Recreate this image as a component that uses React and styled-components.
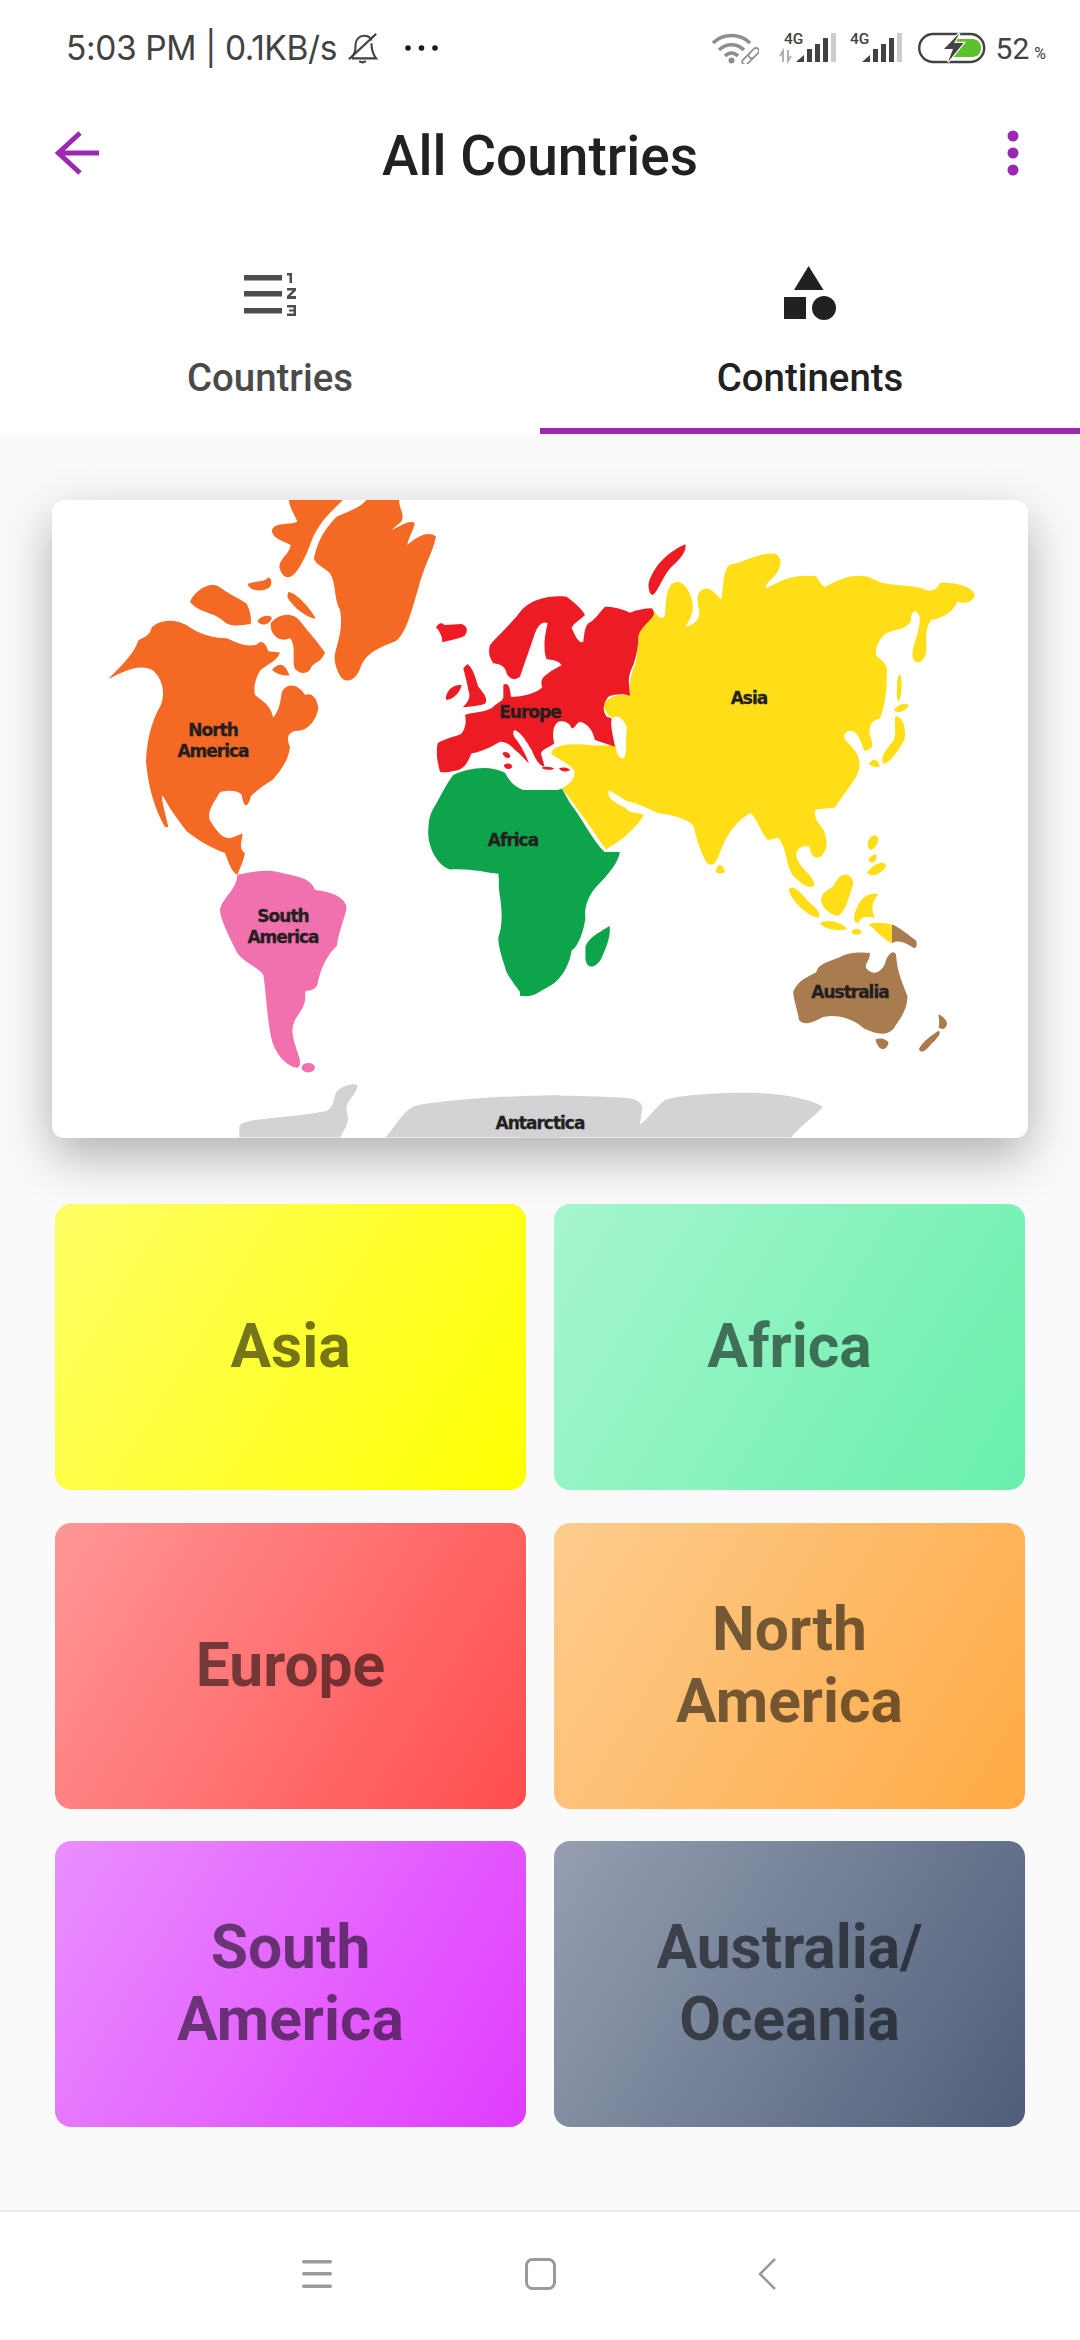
import React from "react";
import styled, { createGlobalStyle } from "styled-components";

const GlobalStyle = createGlobalStyle`
  html, body { margin: 0; padding: 0; background: #fafafa; }
  * { box-sizing: border-box; }
  body { font-family: Roboto, sans-serif; }
`;

const Page = styled.div`
  width: 1080px;
  height: 2340px;
  display: flex;
  flex-direction: column;
  overflow: hidden;
  background: #fafafa;
`;

const StatusBar = styled.div`
  height: 96px;
  background: #fff;
  padding: 0 34px 0 66px;
  display: flex;
  align-items: center;
  justify-content: space-between;
  color: #424242;
`;

const StatusGroup = styled.div`
  display: flex;
  align-items: center;
`;

const StatusText = styled.span`
  font-family: Inter, sans-serif;
  font-size: 33.5px;
  letter-spacing: -0.4px;
  white-space: nowrap;
`;

const Percent = styled.span`
  font-family: Roboto, sans-serif;
  font-size: 30px;
  margin-left: 10px;
  small { font-size: 16px; margin-left: 5px; }
`;

const AppBar = styled.div`
  height: 118px;
  background: #fff;
  display: grid;
  grid-template-columns: 1fr auto 1fr;
  align-items: center;
  padding: 0 61px 4px 55px;
`;

const Title = styled.h1`
  margin: 0;
  padding: 6px 0 0 6px;
  font-size: 55px;
  font-weight: 500;
  color: #212121;
`;

const BarEnd = styled.div`
  display: flex;
  justify-content: ${(p) => (p.$right ? "flex-end" : "flex-start")};
`;

const Tabs = styled.div`
  display: grid;
  grid-template-columns: 540px 540px;
  background: #fff;
  height: 220px;
`;

const Tab = styled.div`
  display: flex;
  flex-direction: column;
  align-items: center;
  padding-top: 48px;
  color: ${(p) => (p.$active ? "#212121" : "#4a4a4a")};
  border-bottom: 6px solid ${(p) => (p.$active ? "#9c27b0" : "transparent")};
`;

const TabIcon = styled.div`
  height: 64px;
  display: flex;
  align-items: center;
  justify-content: center;
`;

const TabLabel = styled.span`
  margin-top: 29px;
  font-size: 38.4px;
  font-weight: 500;
`;

const Content = styled.div`
  flex: 1;
  padding: 66px 52px 0;
`;

const MapCard = styled.div`
  height: 638px;
  background: #fff;
  border-radius: 12px;
  overflow: hidden;
  box-shadow: 0 18px 50px rgba(0, 0, 0, 0.3);
`;

const Grid = styled.div`
  margin: 66px 3px 0;
  display: grid;
  grid-template-columns: repeat(2, 471px);
  grid-auto-rows: 286px;
  column-gap: 28px;
  row-gap: 32.5px;
`;

const Tile = styled.div`
  border-radius: 16px;
  display: flex;
  align-items: center;
  justify-content: center;
  text-align: center;
  padding: 0 40px;
  background: linear-gradient(121.3deg, ${(p) => p.$from}, ${(p) => p.$to});
  color: rgba(0, 0, 0, 0.54);
  font-size: 60.5px;
  font-weight: 700;
  line-height: 72px;
`;

const NavBar = styled.div`
  height: 130px;
  background: #fff;
  border-top: 2px solid #e8e8e8;
  display: flex;
  align-items: center;
  justify-content: center;
  gap: 193px;
  padding: 0 2px 4px 0;
`;

const NavBackSlot = styled.div`
  display: flex;
  margin-left: 9px;
`;

const MapLabel = styled.text`
  font-family: "DejaVu Sans", sans-serif;
  font-weight: 700;
  font-size: 17px;
  letter-spacing: -1px;
  fill: #231f20;
  stroke: #231f20;
  stroke-width: 0.3px;
  text-anchor: middle;
`;

const tiles = [
  { name: "Asia", from: "#ffff66", to: "#ffff00" },
  { name: "Africa", from: "#a7f5cf", to: "#68f0ab" },
  { name: "Europe", from: "#ff9696", to: "#ff4d4d" },
  { name: "North America", from: "#fdcc8e", to: "#ffaa44" },
  { name: "South America", from: "#e98fff", to: "#e03cff" },
  { name: "Australia/ Oceania", from: "#959fb0", to: "#4f5e7a" },
];

// paths are traced in the crop coordinates of the left half, right half and Europe
const WorldMap = () => (
  <svg width="976" height="638" viewBox="0 0 976 638" style={{ display: "block" }}>
    <g transform="translate(-12 -20) scale(0.3333 0.4337)">
      <g fill="#f46a25">
        <path d="M746 45 L910 45 C880 70 850 85 820 130 C800 170 790 190 765 215 C745 232 725 225 718 200 C720 180 750 170 752 150 C730 140 695 135 696 115 C705 95 760 105 772 95 C760 75 750 65 746 45Z" />
        <path d="M980 45 L1078 45 C1075 65 1095 75 1085 95 L1055 115 C1085 105 1110 90 1125 100 C1115 125 1105 135 1102 150 C1125 135 1160 115 1188 130 C1180 165 1150 200 1135 250 C1115 300 1100 350 1070 370 C1030 385 990 390 965 425 C955 450 940 465 915 462 C895 455 880 420 885 400 C895 370 910 340 900 300 C880 270 890 240 870 215 C850 200 825 195 822 180 C835 130 870 100 890 85 C930 70 960 65 980 45Z" />
        <path d="M450 280 C470 250 510 235 535 245 C560 260 590 270 620 285 C632 305 635 320 632 332 C600 335 570 340 550 325 C525 305 470 305 450 280Z" />
        <path d="M623 240 C640 232 670 238 685 225 C695 225 698 240 688 248 C670 258 630 258 623 240Z" />
        <path d="M745 258 C770 260 810 295 828 320 C800 318 760 295 742 270Z" />
        <path d="M652 325 C665 312 690 310 696 318 C690 332 665 340 652 325Z" />
        <path d="M692 330 C720 305 760 305 780 325 C800 345 830 370 855 398 C845 420 825 420 815 430 C805 450 780 448 765 435 C755 420 770 380 750 365 C720 375 690 360 692 330Z" />
        <path d="M696 438 C715 420 735 420 748 450 C730 452 710 448 696 438Z" />
        <path d="M204 460 C240 430 280 405 295 370 C310 362 330 360 335 340 C360 320 410 320 440 335 C475 355 520 365 560 365 C590 375 610 385 650 380 C665 365 680 380 685 395 L720 398 C710 420 680 425 660 440 C645 460 640 480 645 495 C665 510 690 515 700 548 C712 535 720 525 725 490 C740 465 775 470 795 495 C815 490 830 500 835 525 C830 555 800 580 770 578 C750 580 735 590 750 615 C745 650 720 670 700 690 C680 700 650 715 632 730 C625 755 612 760 605 725 C590 715 560 715 540 720 C520 745 500 765 510 785 C530 810 550 830 575 825 L608 815 C605 835 595 850 615 860 C610 880 600 895 592 910 C575 905 565 880 555 860 C520 850 480 835 440 810 C420 790 390 760 370 730 C360 725 370 750 385 800 L375 800 C345 760 325 710 318 650 C320 600 335 560 355 530 C380 500 370 460 340 440 C300 420 240 445 204 460Z" />
      </g>
      <path fill="#0ea44b" d="M1240 680 C1280 665 1350 655 1395 675 C1410 695 1420 705 1450 715 L1560 715 L1560 1130 C1530 1165 1490 1195 1450 1190 C1430 1170 1410 1150 1400 1135 C1390 1110 1375 1080 1375 1055 C1390 1020 1385 990 1380 960 C1375 940 1378 920 1375 908 C1340 905 1290 895 1230 898 C1200 890 1170 860 1165 820 C1165 780 1170 770 1190 745 C1210 715 1225 695 1240 680Z" />
      <path fill="#f171ae" d="M592 910 C630 905 680 895 720 905 C770 915 810 915 825 945 C860 950 910 955 920 985 C915 1010 900 1030 890 1075 C860 1095 840 1130 832 1165 C820 1180 805 1175 795 1180 C800 1210 785 1220 765 1245 C750 1270 760 1290 775 1325 C785 1345 780 1355 770 1355 C735 1350 705 1320 695 1290 C680 1240 680 1190 670 1140 C650 1120 600 1110 585 1080 C565 1050 540 1010 540 990 C550 960 590 945 592 910Z" />
      <ellipse fill="#f171ae" cx="805" cy="1355" rx="20" ry="11" />
      <g fill="#d1d3d4">
        <path d="M598 1516 L598 1490 C610 1470 720 1475 860 1455 C885 1445 880 1420 890 1410 C910 1395 940 1390 953 1395 C950 1420 915 1430 920 1455 C930 1480 920 1490 900 1516Z" />
        <path d="M1035 1516 C1070 1490 1090 1450 1130 1442 C1250 1425 1440 1420 1560 1418 L1560 1516Z" />
      </g>
    </g>
    <g transform="translate(468 -20) scale(0.3444 0.4337)">
      <g fill="#ffde17">
        <path d="M385 300 C400 310 405 325 420 315 C425 290 420 260 440 240 C465 225 490 245 500 280 C505 300 500 315 480 338 C505 335 525 320 520 300 C510 270 515 250 545 250 C565 255 575 270 585 275 C592 240 590 205 610 195 C650 190 700 165 740 170 C765 180 760 200 740 220 C720 235 710 245 715 250 C750 235 790 215 860 222 C875 240 880 250 890 245 C930 225 990 210 1030 230 C1060 245 1120 240 1170 250 C1190 260 1210 255 1220 237 C1260 235 1320 245 1320 268 C1310 285 1285 285 1270 280 C1260 305 1220 320 1195 322 C1175 340 1180 370 1180 395 C1175 420 1150 430 1140 410 C1135 380 1165 350 1160 315 C1150 295 1135 300 1135 325 C1125 345 1080 345 1060 355 C1040 370 1030 390 1035 405 C1055 420 1070 425 1065 450 C1065 500 1055 530 1045 550 C1020 555 1015 565 1015 585 C1025 610 1030 620 1000 625 C990 600 980 580 960 578 C945 578 935 590 945 600 C970 620 990 635 985 665 C975 695 945 715 915 755 L860 760 C850 770 860 785 880 805 C895 830 895 855 870 870 C850 875 845 860 840 845 C815 840 795 855 805 875 C820 900 855 915 855 935 C840 945 815 930 790 910 C770 880 775 850 750 825 L720 830 C700 815 695 790 670 768 C630 785 600 815 580 860 C570 885 555 895 540 880 C520 850 510 820 505 800 C495 785 460 775 400 768 C380 760 340 745 310 740 C290 730 270 720 258 716 C250 730 275 745 305 755 C315 770 340 765 360 772 C345 795 300 830 250 852 C220 820 180 770 145 735 L122 712 C140 700 160 695 158 670 C145 655 115 645 90 632 C95 610 140 605 215 612 L278 612 C280 630 285 640 300 642 C312 635 305 610 310 570 C300 550 285 540 270 548 C250 540 240 525 245 515 C260 500 290 490 320 498 C315 470 325 440 335 425 C345 390 340 360 350 345 C365 330 380 320 385 300Z" />
        <path d="M568 903 C572 885 585 880 596 903 C590 908 575 908 568 903Z" />
        <path d="M1010 835 C1020 815 1040 815 1040 830 C1035 850 1015 860 1010 845Z" />
        <path d="M1012 875 C1025 860 1040 860 1035 872 C1030 885 1015 885 1012 875Z" />
        <path d="M1008 905 C1025 885 1060 875 1063 890 C1055 905 1020 920 1008 905Z" />
        <path d="M780 945 C790 930 815 950 835 970 C855 985 875 995 868 1008 C845 1012 790 975 780 945Z" />
        <path d="M875 965 C880 945 905 945 915 930 C930 900 965 905 968 930 C955 960 950 990 925 1005 C905 1005 870 985 875 965Z" />
        <path d="M985 975 C1000 955 1030 950 1040 955 C1020 975 1020 990 1030 1010 C1010 1005 990 1005 985 1020 C965 1025 965 1005 985 975Z" />
        <path d="M870 1022 C890 1010 935 1020 950 1035 C920 1042 885 1035 870 1022Z" />
        <path d="M962 1040 C975 1030 990 1035 993 1043 C980 1052 965 1050 962 1040Z" />
        <path d="M1012 1025 C1030 1018 1060 1022 1080 1025 L1080 1068 C1055 1060 1030 1035 1012 1025Z" />
        <path d="M1095 465 C1100 440 1108 445 1108 470 C1108 490 1105 510 1098 510 C1092 500 1095 480 1095 465Z" />
        <path d="M1085 530 C1100 515 1120 512 1130 520 C1115 535 1095 540 1085 530Z" />
        <path d="M1090 545 C1110 540 1125 580 1115 600 C1095 630 1075 650 1055 655 C1045 640 1060 625 1085 600 C1095 580 1085 560 1090 545Z" />
        <path d="M1013 655 C1025 640 1035 640 1045 660 C1035 665 1020 660 1013 655Z" />
      </g>
      <path fill="#ed1c24" d="M373 240 C385 200 430 165 480 148 C485 160 470 180 440 200 C415 220 400 260 385 265 C378 265 373 255 373 240Z" />
      <g fill="#0ea44b">
        <path d="M-5 715 C40 720 90 720 122 712 L145 745 C180 780 210 830 245 858 L290 858 C285 885 250 915 225 935 C200 955 185 985 190 1010 C185 1040 170 1075 150 1085 C145 1110 130 1140 100 1160 C70 1175 40 1190 0 1190Z" />
        <path d="M190 1075 C205 1050 240 1040 260 1028 C265 1050 250 1080 235 1105 C220 1125 195 1130 190 1105Z" />
      </g>
      <g fill="#a97c50">
        <path d="M1080 1025 C1100 1030 1130 1050 1150 1062 C1155 1075 1150 1085 1135 1075 C1115 1065 1095 1060 1080 1068Z" />
        <path d="M793 1180 C810 1150 840 1145 860 1135 C865 1115 900 1110 930 1100 C960 1085 1000 1090 1015 1090 C1020 1105 1000 1115 1005 1125 C1025 1145 1050 1135 1060 1115 C1065 1095 1085 1080 1092 1095 C1095 1130 1105 1150 1125 1190 C1125 1225 1100 1245 1085 1265 C1060 1285 1030 1275 1000 1265 C970 1245 930 1230 880 1238 C850 1250 825 1260 810 1245 C805 1220 795 1200 793 1180Z" />
        <path d="M1032 1290 C1045 1285 1070 1290 1070 1300 C1060 1320 1040 1315 1032 1290Z" />
        <path d="M1158 1312 C1170 1295 1195 1280 1215 1270 C1225 1275 1215 1285 1195 1300 C1180 1315 1165 1325 1158 1312Z" />
        <path d="M1215 1232 C1225 1235 1240 1245 1240 1255 C1235 1268 1225 1268 1215 1262 C1220 1250 1215 1240 1215 1232Z" />
      </g>
      <path fill="#d1d3d4" d="M-10 1516 L-10 1428 C60 1415 200 1420 310 1425 C340 1428 355 1435 355 1450 L348 1486 C370 1475 395 1445 420 1430 C480 1415 640 1410 730 1415 C790 1420 850 1430 880 1445 C860 1465 810 1490 788 1516Z" />
    </g>
    <g transform="translate(373 90) scale(0.3333)" fill="#ed1c24">
      <path d="M33 112 C40 100 50 95 58 105 L110 102 C128 108 130 125 118 138 C95 148 70 152 52 157 C52 140 45 125 33 112Z" />
      <path d="M62 325 C65 300 85 282 110 285 C105 305 90 325 65 330Z" />
      <path d="M115 235 L127 222 C145 235 150 260 160 290 C175 310 188 320 182 340 C165 348 135 350 113 352 C125 340 140 325 130 300 C125 270 118 250 115 235Z" />
      <path d="M38 460 C60 445 90 440 108 432 C120 420 125 395 120 375 C140 365 190 370 210 345 C225 335 235 330 235 320 L235 285 C245 278 252 285 255 300 L258 320 C300 322 340 305 352 292 C345 275 350 262 370 250 C380 240 395 235 410 225 C400 212 385 210 365 208 C360 195 352 165 368 100 C355 92 340 100 328 135 C315 175 300 215 285 260 C270 272 255 270 245 250 C240 225 220 222 205 220 C195 205 188 190 195 165 C220 135 260 100 290 60 C320 28 370 15 425 20 C445 35 470 55 480 75 C465 90 445 100 440 115 C450 135 462 165 475 155 C478 130 480 110 490 100 C510 90 525 65 540 50 C560 50 590 55 615 68 C635 60 660 55 680 55 C690 65 688 75 680 85 C660 105 645 120 640 140 C640 170 635 195 625 225 C615 245 610 260 612 280 L615 318 C600 310 570 312 550 320 C535 340 530 360 545 380 L560 385 C555 410 565 440 570 470 L510 450 C505 425 490 400 465 395 C455 398 450 415 440 415 C435 400 420 390 400 395 C385 405 380 430 388 460 C370 475 355 475 348 490 C352 510 358 520 358 530 C340 525 330 505 320 480 C305 455 290 430 270 420 C260 425 265 440 275 450 C290 470 305 500 312 520 C300 510 285 490 270 480 C255 465 245 455 225 455 C200 470 170 485 140 490 C130 510 125 530 100 540 C80 545 55 550 45 545 C38 520 32 490 38 460Z" />
      <path d="M232 490 C240 482 255 488 256 500 C250 508 238 505 232 490Z" />
      <path d="M236 525 C245 518 260 518 262 530 C255 540 240 540 236 525Z" />
      <path d="M350 533 C360 528 380 530 388 536 C375 542 358 540 350 533Z" />
      <path d="M402 535 C415 530 430 532 435 540 C425 547 408 546 402 535Z" />
    </g>
    <MapLabel x="161" y="236">North</MapLabel>
    <MapLabel x="161" y="257">America</MapLabel>
    <MapLabel x="231" y="422">South</MapLabel>
    <MapLabel x="231" y="443">America</MapLabel>
    <MapLabel x="461" y="346">Africa</MapLabel>
    <MapLabel x="478" y="218">Europe</MapLabel>
    <MapLabel x="697" y="204">Asia</MapLabel>
    <MapLabel x="798" y="498">Australia</MapLabel>
    <MapLabel x="488" y="629">Antarctica</MapLabel>
  </svg>
);

const BellOff = () => (
  <svg width="32" height="32" viewBox="0 0 34 34" fill="none" stroke="#424242" strokeWidth="2.2" style={{ marginLeft: 10 }}>
    <path d="M2 29 L31 2" />
    <path d="M5 27 C9 22 9 19 9 14 C9 8 13 4 18 4 C22 4 25 6 26 9 M26 12 C26 18 27 23 31 28 L5 28" />
    <path d="M13 31 C15 32.5 18 32.5 20 31" />
  </svg>
);

const Dots = () => (
  <svg width="33" height="8" viewBox="0 0 33 8" fill="#1a1a1a" style={{ marginLeft: 26 }}>
    <circle cx="3" cy="4" r="2.8" />
    <circle cx="16.5" cy="4" r="2.8" />
    <circle cx="30" cy="4" r="2.8" />
  </svg>
);

const Wifi = () => (
  <svg width="48" height="32" viewBox="0 0 48 32" fill="none" stroke="#8e8e8e" strokeWidth="3.6" style={{ marginRight: 20 }}>
    <path d="M2 11 C12 1 29 1 39 11" />
    <path d="M8 18 C15 11 26 11 33 18" />
    <path d="M14 24 C18 20 23 20 27 24" />
    <circle cx="20.5" cy="28.5" r="3" fill="#8e8e8e" stroke="none" />
    <g strokeWidth="1.7" fill="#fff" transform="rotate(-45 40 24)">
      <rect x="29" y="21" width="12" height="6" rx="3" />
      <rect x="38" y="21" width="12" height="6" rx="3" />
    </g>
  </svg>
);

// viewBox starts above the row so the box of the 4G text stays inside the svg
const Signal = ({ arrows }) => (
  <svg
    width={arrows ? 58 : 53}
    height="36"
    viewBox={arrows ? "0 -4 58 36" : "4 -4 53 36"}
    style={{ marginRight: arrows ? 12 : 16, marginTop: -4 }}
  >
    <text x="5" y="12" fontFamily="Roboto, sans-serif" fontWeight="500" fontSize="15.5" fill="#424242">4G</text>
    {arrows && <path d="M1 24 L4 19 L4 30 M9 18 L9 29 L12 24" stroke="#aaa" strokeWidth="1.8" fill="none" />}
    <path d="M17 30 L25 23 L25 30Z" fill="#424242" />
    <rect x="28" y="17" width="5" height="13" fill="#424242" />
    <rect x="36" y="12" width="5" height="18" fill="#424242" />
    <rect x="44" y="6" width="5" height="24" fill="#424242" />
    <rect x="52" y="1" width="5" height="29" fill="#ccc" />
  </svg>
);

const Battery = () => (
  <svg width="68" height="32" viewBox="0 0 68 32">
    <rect x="1.2" y="2" width="65" height="28" rx="14" fill="none" stroke="#424242" strokeWidth="2.4" />
    <path d="M38 7 L54 7 C60 7 63 11 63 16 C63 21 60 25 54 25 L32 25Z" fill="#5cc12c" />
    <path d="M41.5 1 L26 17 L35 17 L30 30 L45.5 11 L36 11Z" fill="#424242" stroke="#fff" strokeWidth="2.4" paintOrder="stroke" />
  </svg>
);

const BackArrow = () => (
  <svg width="44" height="44" viewBox="0 0 44 44" fill="none" stroke="#9c27b0" strokeWidth="5">
    <path d="M44 22 L3 22" />
    <path d="M25 2 L3.5 22 L25 42" />
  </svg>
);

const MoreVertical = () => (
  <svg width="12" height="46" viewBox="0 0 12 46" fill="#9c27b0">
    <circle cx="6" cy="6" r="5.5" />
    <circle cx="6" cy="23" r="5.5" />
    <circle cx="6" cy="40" r="5.5" />
  </svg>
);

const ListNumbered = () => (
  <svg width="52" height="44" viewBox="0 0 52 44" fill="#4d4d4d">
    <rect x="0" y="3" width="38" height="5.5" />
    <rect x="0" y="19" width="38" height="5.5" />
    <rect x="0" y="36" width="38" height="5.5" />
    <path d="M43 1 H48 V11 H45.5 V3.5 H43Z" />
    <path d="M43 16 H52 V18.5 L46.5 24 H52 V27 H43 V24 L48.5 18.5 H43Z" />
    <path d="M43 33 H52 V44 H43 V41.5 H49.5 V39.5 H45 V37.5 H49.5 V35.5 H43Z" />
  </svg>
);

const Shapes = () => (
  <svg width="52" height="54" viewBox="0 0 52 54" fill="#212121" style={{ marginTop: -2 }}>
    <path d="M24.6 0 L39.5 24 L10 24Z" />
    <rect x="0" y="31" width="22" height="22" />
    <circle cx="40" cy="42" r="12" />
  </svg>
);

const NavMenu = () => (
  <svg width="30" height="28" viewBox="0 0 30 28" fill="#9a9a9a">
    <rect x="0" y="0" width="30" height="3.4" rx="1.7" />
    <rect x="0" y="12" width="30" height="3.4" rx="1.7" />
    <rect x="0" y="24.5" width="30" height="3.4" rx="1.7" />
  </svg>
);

const NavHome = () => (
  <svg width="31" height="32" viewBox="0 0 31 32" fill="none" stroke="#9a9a9a" strokeWidth="3">
    <rect x="1.5" y="1.5" width="28" height="29" rx="6" />
  </svg>
);

const NavBack = () => (
  <svg width="18" height="32" viewBox="0 0 18 32" fill="none" stroke="#9a9a9a" strokeWidth="2.6">
    <path d="M17 1 L2 16 L17 31" />
  </svg>
);

export default function App() {
  return (
    <Page>
      <GlobalStyle />
      <StatusBar>
        <StatusGroup>
          <StatusText>5:03 PM | 0.1KB/s</StatusText>
          <BellOff />
          <Dots />
        </StatusGroup>
        <StatusGroup>
          <Wifi />
          <Signal arrows />
          <Signal />
          <Battery />
          <Percent>52<small>%</small></Percent>
        </StatusGroup>
      </StatusBar>
      <AppBar>
        <BarEnd><BackArrow /></BarEnd>
        <Title>All Countries</Title>
        <BarEnd $right><MoreVertical /></BarEnd>
      </AppBar>
      <Tabs>
        <Tab>
          <TabIcon><ListNumbered /></TabIcon>
          <TabLabel>Countries</TabLabel>
        </Tab>
        <Tab $active>
          <TabIcon><Shapes /></TabIcon>
          <TabLabel>Continents</TabLabel>
        </Tab>
      </Tabs>
      <Content>
        <MapCard><WorldMap /></MapCard>
        <Grid>
          {tiles.map((t) => (
            <Tile key={t.name} $from={t.from} $to={t.to}>{t.name}</Tile>
          ))}
        </Grid>
      </Content>
      <NavBar>
        <NavMenu />
        <NavHome />
        <NavBackSlot><NavBack /></NavBackSlot>
      </NavBar>
    </Page>
  );
}
